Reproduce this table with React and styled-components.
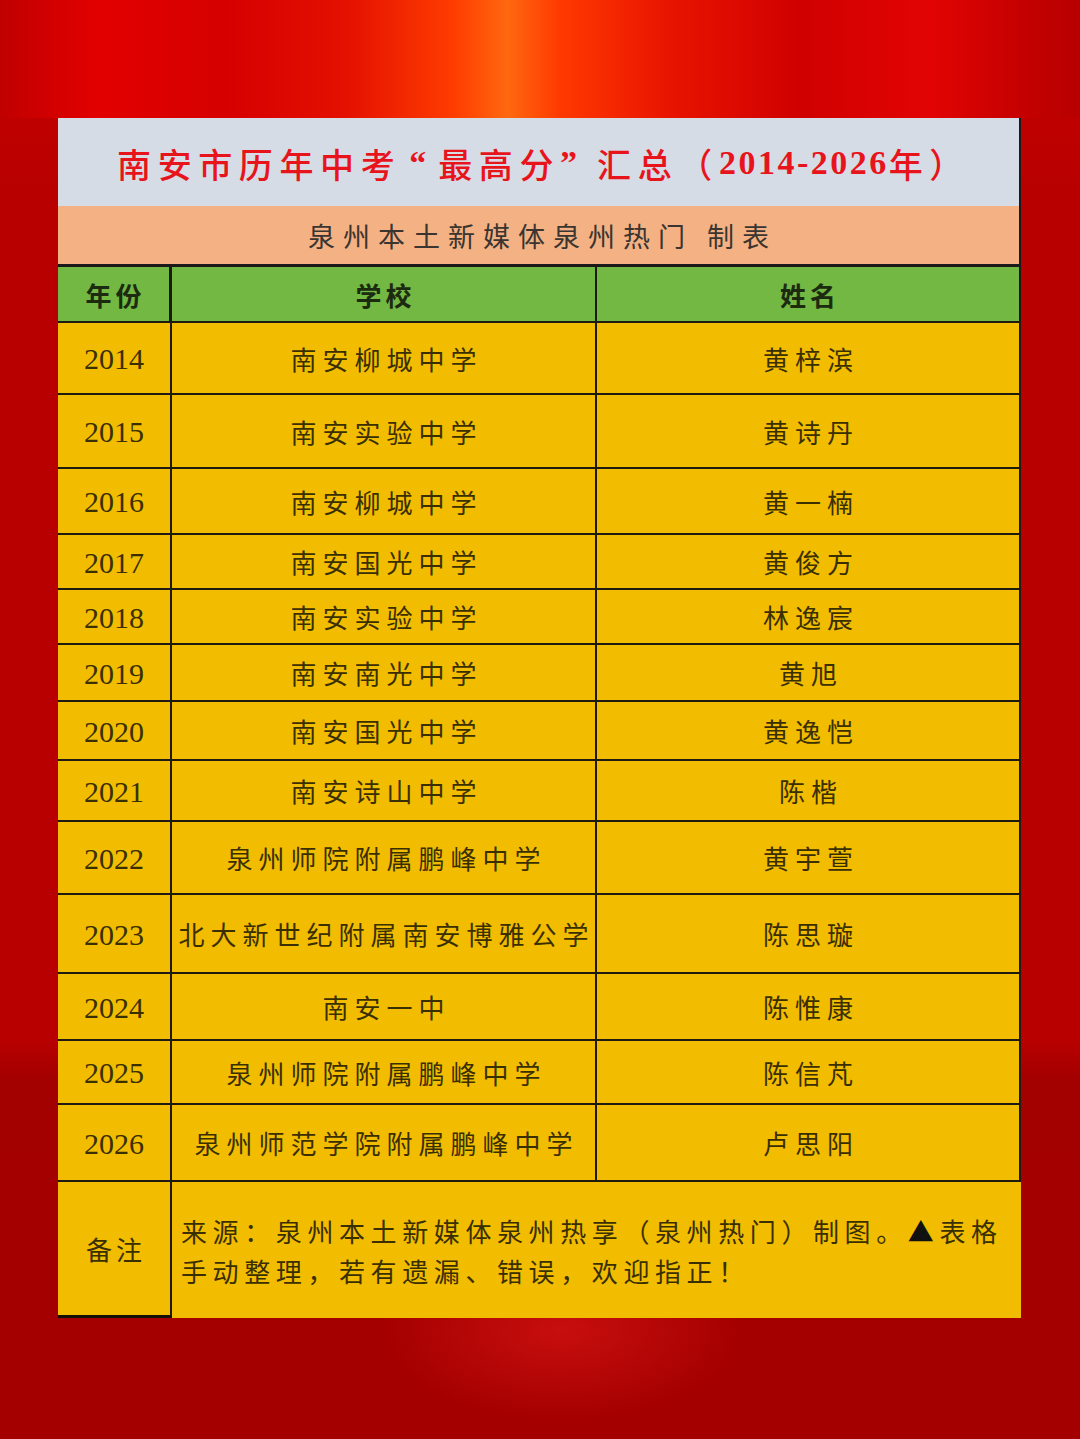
import React from 'react'
import styled, { createGlobalStyle } from 'styled-components'

const rows = [
  { year: '2014', school: '南安柳城中学', name: '黄梓滨', h: 72 },
  { year: '2015', school: '南安实验中学', name: '黄诗丹', h: 74 },
  { year: '2016', school: '南安柳城中学', name: '黄一楠', h: 66 },
  { year: '2017', school: '南安国光中学', name: '黄俊方', h: 55 },
  { year: '2018', school: '南安实验中学', name: '林逸宸', h: 55 },
  { year: '2019', school: '南安南光中学', name: '黄旭', h: 57 },
  { year: '2020', school: '南安国光中学', name: '黄逸恺', h: 59 },
  { year: '2021', school: '南安诗山中学', name: '陈楷', h: 61 },
  { year: '2022', school: '泉州师院附属鹏峰中学', name: '黄宇萱', h: 73 },
  { year: '2023', school: '北大新世纪附属南安博雅公学', name: '陈思璇', h: 79 },
  { year: '2024', school: '南安一中', name: '陈惟康', h: 67 },
  { year: '2025', school: '泉州师院附属鹏峰中学', name: '陈信芃', h: 64 },
  { year: '2026', school: '泉州师范学院附属鹏峰中学', name: '卢思阳', h: 77 },
]

const GlobalStyle = createGlobalStyle`
  html, body {
    margin: 0;
    padding: 0;
    background: #b50000;
  }
  * {
    box-sizing: border-box;
  }
`

const Page = styled.div`
  width: 1080px;
  height: 1439px;
  overflow: hidden;
  padding: 118px 59px 0 58px;
  background:
    radial-gradient(ellipse 180px 90px at 52% 1330px, rgba(215, 20, 20, 0.7), transparent),
    linear-gradient(
      to right,
      #c00000 0%,
      #e20000 9%,
      #d60000 21%,
      #e41000 32%,
      #ff3c00 42%,
      #ff6810 47%,
      #ff3800 52%,
      #e81400 62%,
      #d00000 74%,
      #e20404 86%,
      #c40000 95%,
      #b80000 100%
    ) top / 100% 118px no-repeat,
    linear-gradient(
      to bottom,
      #c80000 0px,
      #b80000 200px,
      #b80000 1040px,
      #a30000 1080px,
      #a50000 1439px
    );
  font-family: 'Noto Sans CJK SC', sans-serif;
`

const Table = styled.div`
  display: grid;
  grid-template-columns: 114px 425px 424px;
  width: 963px;
`

const TitleCell = styled.div`
  grid-column: 1 / -1;
  height: 88px;
  background: #d6dce5;
  border-right: 2px solid #1a1a1a;
  display: flex;
  align-items: center;
  justify-content: center;
  padding-left: 10px;
  padding-top: 2px;
  color: #e8141c;
  font-family: 'Liberation Serif', 'Noto Sans CJK SC', serif;
  font-size: 34px;
  font-weight: 500;
  letter-spacing: 6.6px;
  white-space: nowrap;
`

const Quote = styled.span`
  padding-left: ${p => (p.open ? 8 : 0)}px;
  letter-spacing: ${p => (p.open ? 12 : 20)}px;
  font-weight: 700;
`

const Digits = styled.span`
  font-weight: 700;
  letter-spacing: 2.5px;
`

const SubtitleCell = styled.div`
  grid-column: 1 / -1;
  height: 61px;
  background: #f4b183;
  border-right: 2px solid #1a1a1a;
  border-bottom: 3px solid #1a1a1a;
  display: flex;
  align-items: center;
  justify-content: center;
  padding-left: 8px;
  color: #3a3530;
  font-size: 27px;
  letter-spacing: 8px;
  white-space: pre;
`

const Cell = styled.div`
  height: ${p => p.h}px;
  background: ${p => (p.head ? '#72b843' : '#f2bd00')};
  border-bottom: 2px solid #1e1a10;
  border-right: ${p => (p.head && p.first ? '3px' : '2px')} solid #1e1a10;
  display: flex;
  align-items: center;
  justify-content: center;
  padding-left: ${p => p.spacing}px;
  color: ${p => (p.head ? '#1c2a10' : '#3a2f00')};
  font-size: 26px;
  font-weight: ${p => (p.head ? 700 : 400)};
  letter-spacing: ${p => p.spacing}px;
  white-space: nowrap;
`

const Year = styled(Cell)`
  font-family: 'Liberation Serif', 'Noto Sans CJK SC', serif;
  font-size: 30px;
  letter-spacing: 0;
  padding-left: 0;
  padding-top: 2px;
`

const NoteLabel = styled.div`
  height: 136px;
  background: #f2bd00;
  border-right: 2px solid #1e1a10;
  border-bottom: 3px solid #141008;
  display: flex;
  align-items: center;
  justify-content: center;
  padding-left: 4px;
  color: #3a2f00;
  font-size: 26px;
  letter-spacing: 4px;
`

const NoteText = styled.div`
  grid-column: 2 / -1;
  height: 136px;
  background: #f2bd00;
  display: flex;
  flex-direction: column;
  justify-content: center;
  padding-left: 9px;
  padding-top: 2px;
  color: #3a2f00;
  font-size: 26px;
  line-height: 40px;
  letter-spacing: 5.6px;
  white-space: nowrap;
`

const Triangle = styled.span`
  color: #111;
`

export default function App() {
  return (
    <Page>
      <GlobalStyle />
      <Table>
        <TitleCell>
          南安市历年中考<Quote open>“</Quote>最高分<Quote>”</Quote>汇总（<Digits>2014-2026</Digits>年）
        </TitleCell>
        <SubtitleCell>{'泉州本土新媒体泉州热门 制表'}</SubtitleCell>

        <Cell head first h={56} spacing={4}>年份</Cell>
        <Cell head h={56} spacing={4}>学校</Cell>
        <Cell head h={56} spacing={4}>姓名</Cell>

        {rows.map(r => (
          <React.Fragment key={r.year}>
            <Year h={r.h}>{r.year}</Year>
            <Cell h={r.h} spacing={6}>{r.school}</Cell>
            <Cell h={r.h} spacing={6}>{r.name}</Cell>
          </React.Fragment>
        ))}

        <NoteLabel>备注</NoteLabel>
        <NoteText>
          <div>
            来源：泉州本土新媒体泉州热享（泉州热门）制图。<Triangle>▲</Triangle>表格
          </div>
          <div>手动整理，若有遗漏、错误，欢迎指正！</div>
        </NoteText>
      </Table>
    </Page>
  )
}
